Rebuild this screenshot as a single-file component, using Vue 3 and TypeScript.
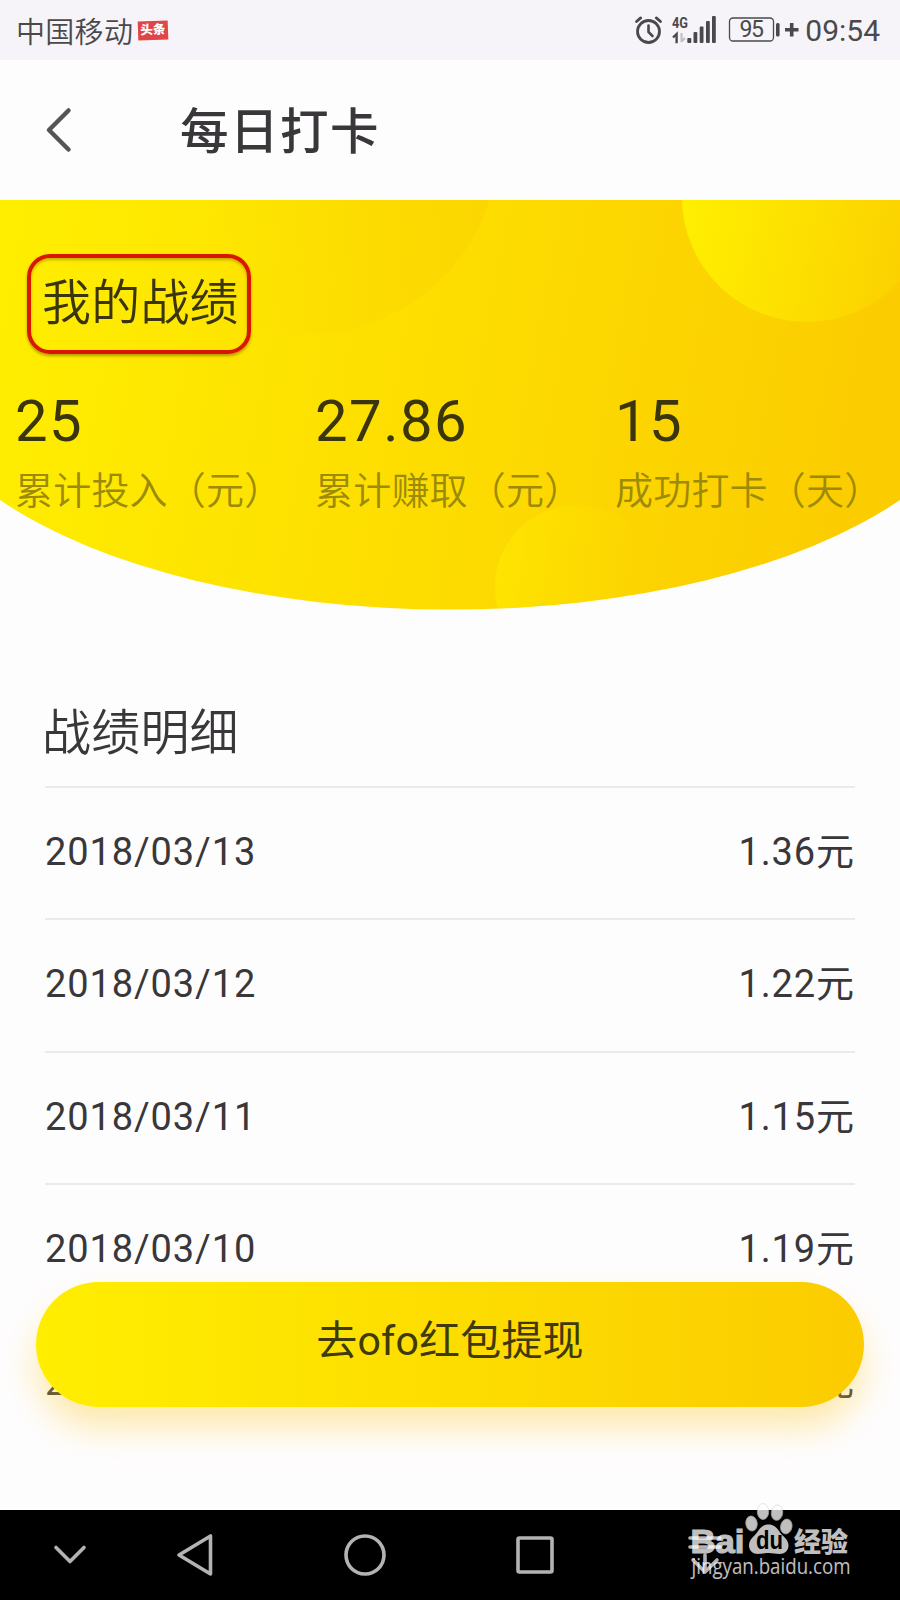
<script setup lang="ts">
interface Stat {
  value: string
  label: string
}
interface Entry {
  date: string
  amount: string
}

const stats: Stat[] = [
  { value: '25', label: '累计投入（元）' },
  { value: '27.86', label: '累计赚取（元）' },
  { value: '15', label: '成功打卡（天）' },
]

const entries: Entry[] = [
  { date: '2018/03/13', amount: '1.36元' },
  { date: '2018/03/12', amount: '1.22元' },
  { date: '2018/03/11', amount: '1.15元' },
  { date: '2018/03/10', amount: '1.19元' },
  { date: '2018/03/09', amount: '1.21元' },
]
</script>

<template>
  <div class="phone">
    <header class="status">
      <span class="carrier">中国移动</span>
      <span class="news">头条</span>
      <svg class="status-icons" width="170" height="60" viewBox="630 0 170 60">
        <g fill="none" stroke="#4a484b" stroke-linecap="round">
          <circle cx="648.5" cy="31.5" r="11" stroke-width="2.8" />
          <path d="M648.5 25.5v6.5l4 4" stroke-width="2.6" />
          <path d="M636.5 21.5l4.2-3.6M660.5 21.5l-4.2-3.6" stroke-width="2.8" />
        </g>
        <text x="672" y="28" class="net" textLength="16" lengthAdjust="spacingAndGlyphs">4G</text>
        <path d="M673 37.5l3.600-3.500v9.200" fill="none" stroke="#4a484b" stroke-width="2.400" />
        <path d="M681.500 33v8M681 42l4-4" fill="none" stroke="#c4c1c6" stroke-width="2.200" />
        <g fill="#4a484b">
          <rect x="687.300" y="38" width="4" height="5" rx="1" />
          <rect x="693.500" y="32" width="3.800" height="11" rx="1" />
          <rect x="699.700" y="26.500" width="3.800" height="16.500" rx="1" />
          <rect x="706" y="21" width="3.800" height="22" rx="1" />
          <rect x="712" y="16" width="3.800" height="27" rx="1" />
          <rect x="776" y="23" width="3.600" height="13.500" rx="1.500" />
        </g>
        <rect x="729.500" y="18" width="44" height="23" rx="3.500" fill="none" stroke="#4a484b" stroke-width="1.300" />
        <text x="739.500" y="37" class="battery" textLength="24.500">95</text>
        <path d="M785 29.800h13.500M791.700 23v13.500" stroke="#4a484b" stroke-width="3.600" />
      </svg>
      <time class="clock">09:54</time>
    </header>

    <nav class="titlebar">
      <svg class="back" width="30" height="50" viewBox="0 0 30 50">
        <path d="M25.500 5.500L6 25L25.500 44.500" fill="none" stroke="#565457" stroke-width="4.500" stroke-linecap="round" stroke-linejoin="round" />
      </svg>
      <h1>每日打卡</h1>
    </nav>

    <section class="hero">
      <svg class="hero-bg" width="900" height="410" viewBox="0 0 900 410">
        <defs>
          <linearGradient id="base" gradientUnits="userSpaceOnUse" x1="0" y1="80" x2="880" y2="240">
            <stop offset="0" stop-color="#ffee00" />
            <stop offset="1" stop-color="#fbcc00" />
          </linearGradient>
          <linearGradient id="dusk" x1="0.250" y1="0.700" x2="0.950" y2="0.500">
            <stop offset="0" stop-color="#f9cc00" stop-opacity="0" />
            <stop offset="1" stop-color="#f9cc00" stop-opacity="0.400" />
          </linearGradient>
          <linearGradient id="sun" x1="0" y1="0.450" x2="1" y2="0.650">
            <stop offset="0" stop-color="#fff000" />
            <stop offset="1" stop-color="#fbcf00" />
          </linearGradient>
          <linearGradient id="glow" x1="0" y1="0.500" x2="0.900" y2="0.600">
            <stop offset="0" stop-color="#ffe600" stop-opacity="0.850" />
            <stop offset="1" stop-color="#fddc00" stop-opacity="0" />
          </linearGradient>
          <clipPath id="bowl">
            <path d="M0 0H900V300A540 245 0 0 1 0 300Z" />
          </clipPath>
        </defs>
        <g clip-path="url(#bowl)">
          <rect width="900" height="410" fill="url(#base)" />
          <circle cx="308" cy="-55.500" r="189.500" fill="url(#dusk)" />
          <circle cx="807" cy="-3" r="125" fill="url(#sun)" />
          <circle cx="577" cy="387" r="82" fill="url(#glow)" />
        </g>
      </svg>
      <div class="hero-content">
        <h2 class="marked">我的战绩</h2>
        <div class="stats">
          <div v-for="s in stats" :key="s.label" class="stat">
            <strong>{{ s.value }}</strong>
            <span>{{ s.label }}</span>
          </div>
        </div>
      </div>
    </section>

    <section class="details">
      <h2>战绩明细</h2>
      <ul>
        <li v-for="e in entries" :key="e.date">
          <span>{{ e.date }}</span>
          <span>{{ e.amount }}</span>
        </li>
      </ul>
    </section>

    <button class="withdraw" type="button">去ofo红包提现</button>

    <footer class="softkeys">
      <svg width="900" height="110" viewBox="0 1490 900 110">
        <g fill="none" stroke="#b5b2b6" stroke-width="3.600" stroke-linecap="round" stroke-linejoin="round">
          <path d="M56 1547.500l14 14l14-14" />
          <path d="M179 1555l31.500-19v38z" />
          <circle cx="365" cy="1555" r="19" />
          <rect x="518" y="1538" width="34" height="34" rx="1.500" />
          <path d="M690 1538h30M690 1547h30M705 1555v16M693 1560l12 12l12-12" />
        </g>
        <g class="watermark">
          <text x="690.500" y="1552.500" class="brand" textLength="54" lengthAdjust="spacingAndGlyphs">Bai</text>
          <g stroke="#d2d2d2" stroke-width="0.800">
            <ellipse cx="751.500" cy="1523.500" rx="5.700" ry="7.500" transform="rotate(-8 751.500 1523.500)" />
            <ellipse cx="763" cy="1511.500" rx="5.700" ry="8" />
            <ellipse cx="777" cy="1512.700" rx="5.700" ry="7.700" transform="rotate(8 777 1512.700)" />
            <ellipse cx="786.300" cy="1526.500" rx="5.700" ry="7.500" transform="rotate(12 786.300 1526.500)" />
          </g>
          <path d="M768.500 1524.500c6 0 9 4 11.500 8c3 4 8.500 7 8.500 13c0 5-4 8.500-9 8.500c-4 0-6.500-1-11-1s-6.500 1-10.500 1c-5 0-9-3.500-9-8.500c0-6 5-9 8-13c2.500-4 5.500-8 11.500-8z" />
          <text x="756" y="1549" class="du" textLength="27" lengthAdjust="spacingAndGlyphs">du</text>
          <text x="794" y="1551.500" class="brand-cn" textLength="54">经验</text>
          <text x="691.500" y="1574" class="site" textLength="159" lengthAdjust="spacingAndGlyphs">jingyan.baidu.com</text>
        </g>
      </svg>
    </footer>
  </div>
</template>

<style>
body {
  margin: 0;
  background: #fefdfe;
}
</style>

<style scoped>
.phone {
  position: relative;
  display: flex;
  flex-direction: column;
  width: 900px;
  height: 1600px;
  overflow: hidden;
  background: #fefdfe;
  color: #39373a;
  font-family: Roboto, "Noto Sans CJK SC", sans-serif;
}
h1, h2, ul {
  margin: 0;
  padding: 0;
  font-weight: 400;
}
.status {
  display: flex;
  align-items: center;
  flex: none;
  height: 60px;
  padding: 0 20px 0 16px;
  background: #f6f4f8;
  color: #4a484b;
}
.carrier {
  padding-top: 5px;
  font-size: 29px;
  letter-spacing: 0.300px;
  line-height: 60px;
  font-weight: 350;
}
.news {
  width: 30px;
  height: 19px;
  margin-left: 5px;
  background: #e0454a;
  color: #fff;
  font-size: 12.500px;
  font-weight: 900;
  line-height: 18px;
  text-align: center;
  transform: rotate(-2deg);
}
.status-icons {
  margin-left: auto;
}
.net {
  font: 700 15px Roboto, sans-serif;
  fill: #4a484b;
}
.battery {
  font: 400 23px Roboto, sans-serif;
  fill: #4a484b;
}
.clock {
  padding-top: 2px;
  margin-left: 5px;
  font-size: 30px;
  line-height: 60px;
}
.titlebar {
  display: flex;
  align-items: center;
  flex: none;
  height: 140px;
  padding-left: 43px;
}
.titlebar h1 {
  padding-top: 5px;
  margin-left: 107px;
  font-size: 48.500px;
  font-weight: 500;
  letter-spacing: 1.500px;
  line-height: 135px;
}
.hero {
  display: grid;
  flex: none;
  height: 410px;
}
.hero-bg,
.hero-content {
  grid-area: 1 / 1;
}
.hero-content {
  padding-top: 54px;
  z-index: 1;
}
.marked {
  box-sizing: border-box;
  width: 224px;
  height: 100px;
  margin-left: 27px;
  padding-left: 11px;
  border: 4px solid #d81602;
  border-radius: 23px;
  box-shadow: 0 2px 3px rgba(90, 60, 0, 0.45), inset 0 2px 3px rgba(90, 60, 0, 0.35);
  color: #3a350d;
  font-size: 49px;
  font-weight: 350;
  letter-spacing: 0.200px;
  line-height: 92px;
  white-space: nowrap;
}
.stats {
  display: grid;
  grid-template-columns: repeat(3, 300px);
  padding: 32px 0 0 15px;
}
.stat {
  display: flex;
  flex-direction: column;
}
.stat strong {
  color: #3a350d;
  font-size: 58px;
  font-weight: 400;
  letter-spacing: 1.500px;
  line-height: 71px;
}
.stat span {
  color: #9c8a08;
  font-size: 38px;
  font-weight: 350;
  letter-spacing: 0.200px;
  line-height: 68px;
  white-space: nowrap;
}
.details {
  flex: 1;
  min-height: 0;
  padding: 0 45px;
}
.details h2 {
  height: 176px;
  box-sizing: border-box;
  padding-top: 88px;
  margin-left: -3px;
  font-size: 49px;
  font-weight: 350;
  letter-spacing: 0.200px;
  line-height: 72px;
}
.details ul {
  list-style: none;
}
.details li {
  display: flex;
  justify-content: space-between;
  box-sizing: border-box;
  height: 132.400px;
  border-top: 2px solid #ebe9ed;
  font-size: 38px;
  letter-spacing: 0.900px;
  line-height: 129px;
}
.withdraw {
  position: absolute;
  left: 36px;
  top: 1282px;
  width: 828px;
  height: 125px;
  padding: 0 0 7px;
  border: 0;
  border-radius: 63px;
  background: linear-gradient(90deg, #ffee00, #fbcc00);
  box-shadow: 0 21px 34px rgba(253, 205, 50, 0.4);
  color: #3f390c;
  font-family: inherit;
  font-size: 41px;
  letter-spacing: 0.200px;
  line-height: 118px;
}
.softkeys {
  flex: none;
  height: 90px;
  background: #000;
}
.softkeys svg {
  display: block;
  margin-top: -20px;
  position: relative;
}
.watermark {
  fill: #fff;
  opacity: 0.75;
}
.brand {
  font: 700 34px "Liberation Sans", sans-serif;
  stroke: #fff;
  stroke-width: 1.200px;
}
.du {
  font: 700 25px "Liberation Sans", sans-serif;
  fill: #000;
}
.brand-cn {
  font: 900 27px "Noto Sans CJK SC", sans-serif;
}
.site {
  font: 500 21px "Open Sans", sans-serif;
}
</style>
